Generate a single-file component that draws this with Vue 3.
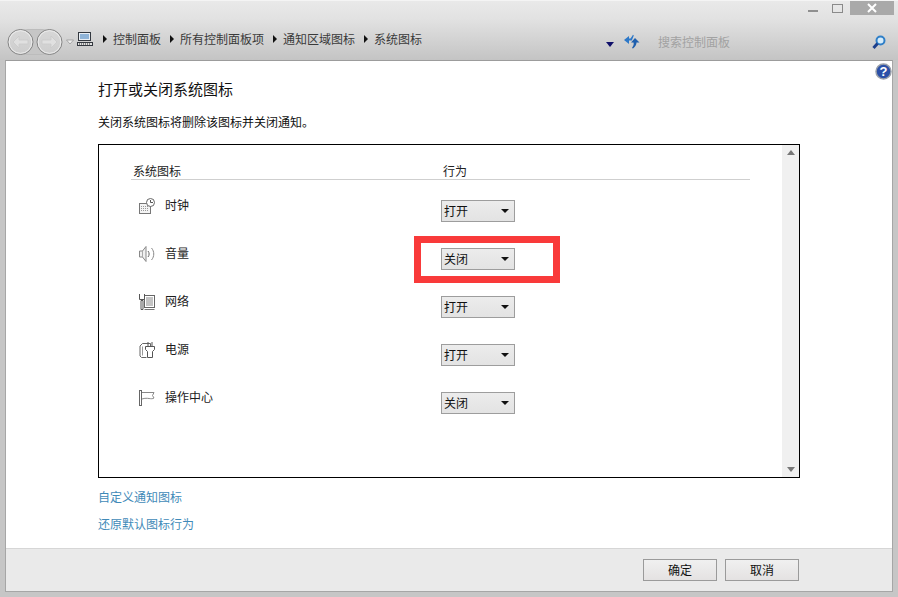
<script setup>
const crumbs = ['控制面板', '所有控制面板项', '通知区域图标', '系统图标']
const rows = [
  { icon: 'clock', name: '时钟', value: '打开' },
  { icon: 'sound', name: '音量', value: '关闭' },
  { icon: 'net', name: '网络', value: '打开' },
  { icon: 'power', name: '电源', value: '打开' },
  { icon: 'flag', name: '操作中心', value: '关闭' },
]
</script>

<template>
  <div class="win">
    <header class="chrome">
      <div class="caption">
        <span class="min"></span>
        <span class="max"></span>
        <span class="close">
          <svg width="12" height="10" viewBox="0 0 12 10"><path d="M2 1l8 8M10 1l-8 8" stroke="#fff" stroke-width="2" fill="none"/></svg>
        </span>
      </div>
      <div class="nav">
        <svg class="navbtns" width="77" height="28" viewBox="0 0 77 28">
          <defs>
            <linearGradient id="g" x1="0" y1="0" x2="0" y2="1"><stop offset="0" stop-color="#d8d8d8"/><stop offset="1" stop-color="#cdcdcd"/></linearGradient>
          </defs>
          <rect x="16" y="1.500" width="38" height="25" rx="12" fill="#c6c6c6" stroke="#bcbcbc"/>
          <circle cx="20.500" cy="14" r="12.500" fill="url(#g)" stroke="#858585"/>
          <circle cx="20.500" cy="14" r="11.300" fill="none" stroke="#ececec"/>
          <circle cx="49.500" cy="14" r="12.500" fill="url(#g)" stroke="#858585"/>
          <circle cx="49.500" cy="14" r="11.300" fill="none" stroke="#ececec"/>
          <path d="M13 14l6-6v4h9v4h-9v4z" fill="#e0e0e0" stroke="#cacaca" stroke-width=".8"/>
          <path d="M57 14l-6-6v4h-9v4h9v4z" fill="#e0e0e0" stroke="#cacaca" stroke-width=".8"/>
          <path d="M66.500 12h7l-3.500 4z" fill="#f0f0f0" stroke="#999" stroke-width=".8"/>
        </svg>
        <svg class="pc" width="16" height="14" viewBox="0 0 16 14">
          <rect x="1.500" y=".5" width="12" height="8" fill="#e8eef4" stroke="#33383f"/>
          <rect x="3" y="2" width="9" height="5" fill="#8fb4d8"/>
          <rect x=".5" y="10.500" width="15" height="3" fill="#e2e2e2" stroke="#33383f"/>
          <path d="M2 12h1M4 12h1M6 12h1M8 12h1M10 12h1M12 12h1" stroke="#222"/>
        </svg>
        <div class="crumbs">
          <template v-for="c in crumbs" :key="c">
            <i class="tri"></i><span>{{ c }}</span>
          </template>
        </div>
        <i class="drop"></i>
        <svg class="refresh" width="16" height="15" viewBox="0 0 16 15">
          <path d="M0 6l5-4v2.500h1.500L9 .8l.8.6-2 5.100H5V10z" fill="#2d78c8"/>
          <path d="M15.500 8.500L11 4 7 8.500h2.500c.5 1.500.2 3-1.500 5.500l1 .5c2.500-2 3.500-4 3.500-6z" fill="#1f5fae"/>
        </svg>
        <span class="search">搜索控制面板</span>
        <svg class="mag" width="14" height="15" viewBox="0 0 14 15">
          <circle cx="8.500" cy="5.500" r="4" fill="#d6ecfa" stroke="#2f7fc8" stroke-width="2"/>
          <path d="M5.500 8.500L1.500 13" stroke="#1c3f8c" stroke-width="3"/>
        </svg>
      </div>
    </header>

    <main class="body">
      <svg class="help" width="17" height="17" viewBox="0 0 17 17">
        <circle cx="8.500" cy="8.500" r="7.500" fill="#2b50a8" stroke="#9aa0aa" stroke-width="1.500"/>
        <text x="8.500" y="13" text-anchor="middle" class="qm">?</text>
      </svg>
      <div class="content">
        <h1>打开或关闭系统图标</h1>
        <p class="sub">关闭系统图标将删除该图标并关闭通知。</p>
        <section class="frame">
          <div class="list">
            <div class="head">
              <span class="c1">系统图标</span>
              <span class="c2">行为</span>
            </div>
            <div v-for="r in rows" :key="r.name" class="row">
              <div class="label">
                <svg class="ico" width="18" height="18" viewBox="0 -2 18 18" fill="none" stroke="#777">
                  <template v-if="r.icon === 'clock'">
                    <rect x=".5" y="5.500" width="11" height="10" fill="#f4f4f4"/>
                    <path d="M2 8.500h8M2 10.500h8M2 12.500h8" stroke="#999" stroke-dasharray="1 1"/>
                    <circle cx="11.500" cy="4.500" r="4" fill="#fff" stroke="#666"/>
                    <path d="M11.500 2v2.500h2.500" stroke="#555"/>
                  </template>
                  <template v-else-if="r.icon === 'sound'">
                    <path d="M.5 5h3l3.500-4.500v15L3.500 11h-3z" fill="#f0f0f0" stroke="#888"/>
                    <path d="M3.500 5v6" stroke="#aaa"/>
                    <path d="M9 5c1.500 2 1.500 4 0 6" stroke="#666"/>
                    <path d="M12.500 2c3 3.500 3 8.500 0 12" stroke="#888"/>
                  </template>
                  <template v-else-if="r.icon === 'net'">
                    <rect x="5.500" y="1.500" width="10" height="12" fill="#fff" stroke="#666"/>
                    <rect x="7" y="3" width="7" height="9" fill="#c4c4c4" stroke="none"/>
                    <path d="M5.500 15.500h10" stroke="#777"/>
                    <path d="M.5 0v5.500h5V0" fill="#fff" stroke="#555"/>
                    <path d="M2 6.500h2v9H2z" fill="#fff" stroke="#555"/>
                  </template>
                  <template v-else-if="r.icon === 'power'">
                    <path d="M3.500 1.500h8v3M3.500 1.500L1 4v10l1.500 1.500h5" stroke="#666"/>
                    <path d="M3.500 4.500v9" stroke="#999"/>
                    <path d="M9 0v5M13 0v5M6.500 4.500h9v3l-2 2v6h-5v-6l-2-2z" fill="#fff" stroke="#555"/>
                  </template>
                  <template v-else>
                    <rect x=".5" y=".5" width="2" height="15" fill="#fff" stroke="#666"/>
                    <path d="M3 2.500h12l-1.500 3 1.500 2.500c-3 2-6-1-12 1" fill="#fff" stroke="#888"/>
                  </template>
                </svg>
                <span>{{ r.name }}</span>
              </div>
              <div class="sel">
                <span>{{ r.value }}</span>
                <i class="caret"></i>
              </div>
            </div>
            <div class="mark"></div>
          </div>
          <aside class="scroll">
            <i class="up"></i>
            <i class="down"></i>
          </aside>
        </section>
        <a class="link first">自定义通知图标</a>
        <a class="link">还原默认图标行为</a>
      </div>
      <footer class="foot">
        <button>确定</button>
        <button>取消</button>
      </footer>
    </main>
  </div>
</template>

<style>
html, body { margin: 0; }
</style>

<style scoped>
.win {
  width: 898px;
  height: 597px;
  box-sizing: border-box;
  display: flex;
  flex-direction: column;
  background: #c6c6c6;
  font: 12px/16px "Noto Sans CJK SC", "Liberation Sans", sans-serif;
  color: #1c1c1c;
  overflow: hidden;
}
.chrome {
  height: 60px;
  flex: none;
  background: linear-gradient(#e9e9e9, #e2e2e2 30%, #c4c4c4);
  border-top: 1px solid #f4f4f4;
  box-sizing: border-box;
}
.caption {
  height: 14px;
  display: flex;
  justify-content: flex-end;
  align-items: flex-start;
  padding-right: 4px;
}
.min {
  width: 10px;
  height: 2px;
  margin: 9px 14px 0 0;
  background: #8f8f8f;
}
.max {
  width: 9px;
  height: 7px;
  margin: 3px 7px 0 0;
  border: 1px solid #8a8a8a;
}
.close {
  width: 44px;
  height: 14px;
  background: #a9a9a9;
  display: flex;
  align-items: center;
  justify-content: center;
}
.nav {
  height: 28px;
  margin-top: 13px;
  display: flex;
  align-items: center;
  color: #3a3a3a;
}
.navbtns { flex: none; }
.pc { flex: none; margin-bottom: 6px; }
.crumbs {
  display: flex;
  align-items: center;
  margin: 0 0 6px 10px;
  width: 503px;
  flex: none;
}
.crumbs span { margin: 0 9px 0 6px; }
.tri {
  width: 0;
  height: 0;
  border-left: 4px solid #111;
  border-top: 4px solid transparent;
  border-bottom: 4px solid transparent;
}
.drop {
  width: 0;
  height: 0;
  margin-top: 4px;
  border-top: 5px solid #10106a;
  border-left: 4px solid transparent;
  border-right: 4px solid transparent;
}
.refresh { margin: 0 0 1px 10px; flex: none; }
.search {
  margin-left: 18px;
  color: #a2a2a2;
  width: 214px;
}
.mag { flex: none; }
.body {
  flex: 1;
  margin: 0 5px 5px;
  background: #fff;
  border: 1px solid #a6a6a6;
  border-top-color: #9c9c9c;
  position: relative;
  display: flex;
  flex-direction: column;
  min-height: 0;
}
.help { position: absolute; right: 0; top: 2px; }
.qm { font: bold 13px "Liberation Sans", sans-serif; fill: #fff; }
.content { flex: 1; padding: 18px 0 0 92px; }
h1 {
  margin: 0;
  font-size: 15px;
  line-height: 20px;
  font-weight: 400;
  color: #111;
}
.sub { margin: 15px 0 0; line-height: 16px; color: #111; }
.frame {
  margin-top: 14px;
  width: 702px;
  height: 334px;
  box-sizing: border-box;
  border: 1px solid #000;
  display: flex;
}
.list { flex: 1; padding: 17px 32px 0 32px; position: relative; }
.head {
  display: flex;
  height: 17px;
  border-bottom: 1px solid #cfcfcf;
  line-height: 18px;
  color: #222;
}
.c1 { width: 312px; padding-left: 2px; box-sizing: border-box; }
.row {
  height: 48px;
  display: flex;
  align-items: flex-start;
}
.label {
  width: 310px;
  padding: 16px 0 0 8px;
  box-sizing: border-box;
  display: flex;
  gap: 8px;
  align-items: center;
}
.ico { flex: none; }
.sel {
  width: 74px;
  height: 22px;
  margin-top: 20px;
  box-sizing: border-box;
  border: 1px solid #9d9d9d;
  background: linear-gradient(#ececec, #e3e3e3);
  display: flex;
  align-items: center;
  justify-content: space-between;
  padding: 0 5px 0 2px;
  color: #111;
}
.caret {
  width: 0;
  height: 0;
  border-top: 4px solid #111;
  border-left: 4px solid transparent;
  border-right: 4px solid transparent;
}
.mark {
  position: absolute;
  left: 315px;
  top: 91px;
  width: 132px;
  height: 33px;
  border: 7px solid #f93a3a;
}
.scroll {
  width: 17px;
  background: #f0f0f0;
  display: flex;
  flex-direction: column;
  justify-content: space-between;
  align-items: center;
  padding: 5px 0;
  box-sizing: border-box;
}
.up, .down {
  width: 0;
  height: 0;
  border-left: 4px solid transparent;
  border-right: 4px solid transparent;
}
.up { border-bottom: 5px solid #777; }
.down { border-top: 5px solid #777; }
.link { display: block; color: #3f8ab8; line-height: 16px; margin-top: 11px; }
.foot {
  height: 43px;
  box-sizing: border-box;
  background: #eaeaea;
  border-top: 1px solid #d6d6d6;
  display: flex;
  justify-content: flex-end;
  gap: 8px;
  padding: 10px 93px 0 0;
  flex: none;
}
button {
  width: 74px;
  height: 22px;
  padding: 0;
  box-sizing: border-box;
  border: 1px solid #9a9a9a;
  background: linear-gradient(#f0f0f0, #e4e2e2);
  font: inherit;
  color: #111;
}
</style>
